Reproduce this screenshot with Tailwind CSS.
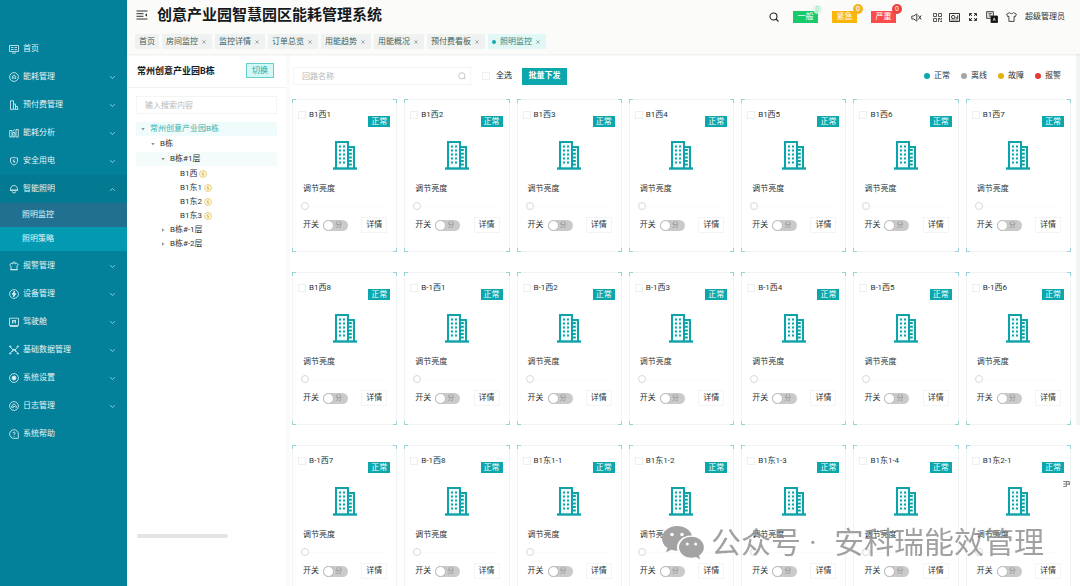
<!DOCTYPE html>
<html lang="zh-CN">
<head>
    <meta charset="UTF-8">
    <meta name="viewport" content="width=device-width, initial-scale=1.0">
    <title>创意产业园智慧园区能耗管理系统</title>
    <script src="https://cdn.jsdelivr.net/npm/@tailwindcss/browser@4"></script>
</head>
<body class="flex h-screen overflow-hidden bg-[#fbfbfa] font-['Roboto','Noto_Sans_CJK_SC',sans-serif] text-[8px] leading-[12px] text-[#2c3333]">

    <!-- 左侧菜单 -->
    <aside class="w-[127px] shrink-0 bg-[#03809a] pt-[35px] text-[#e3f5f6]">
        <nav id="sideMenu"></nav>
    </aside>

    <div class="flex min-w-0 flex-1 flex-col">
        <!-- 顶部栏 -->
        <header class="relative z-10 h-[54px] shrink-0 shadow-[0_1px_2px_rgba(0,0,0,0.08)]">
            <div class="flex h-[34px] items-center pr-[15px] pl-[9px]">
                <button aria-label="收起菜单" class="-mt-[5px] mr-[9px]">
                    <svg class="h-[10px] w-[12px]" viewBox="0 0 12 10" fill="none" stroke="#333" stroke-width="1"><path d="M.5 1h11M.5 3.7h7M.5 6.3h7M.5 9h11" /><path d="M11 3.2 9 5l2 1.8z" fill="#333" stroke="none" /></svg>
                </button>
                <h1 class="-mt-[5px] text-[15px] leading-[20px] font-bold whitespace-nowrap text-[#16191c]">创意产业园智慧园区能耗管理系统</h1>
                <div class="ml-auto flex items-center">
                    <button aria-label="搜索" class="mr-[14px]">
                        <svg class="size-[10px]" viewBox="0 0 10 10" fill="none" stroke="#222" stroke-width="1.1"><circle cx="4.5" cy="4.5" r="3.5" /><path d="M7 7l2.5 2.5" /></svg>
                    </button>
                    <button class="relative mr-[14px] h-[12px] w-[25px] bg-[#19ca6d] text-white">一般<span class="absolute -top-[6px] -right-[4px] size-[9px] rounded-full bg-[#d3f5e2]/80 text-center text-[7px] leading-[9px] text-[#9fe3c0]">0</span></button>
                    <button class="relative mr-[14px] h-[12px] w-[25px] bg-[#fbb60b] text-white">紧急<span class="absolute -top-[7px] -right-[6px] size-[10px] rounded-full bg-[#f3b51c] text-center text-[7px] leading-[10px] text-white">0</span></button>
                    <button class="relative mr-[15px] h-[12px] w-[25px] bg-[#fb4b4b] text-white">严重<span class="absolute -top-[7px] -right-[6px] size-[10px] rounded-full bg-[#ee4040] text-center text-[7px] leading-[10px] text-white">0</span></button>
                    <button aria-label="静音" class="mr-[11px]">
                        <svg class="h-[9px] w-[11px]" viewBox="0 0 11 9" fill="none" stroke="#333" stroke-width=".9"><path d="M.8 3h2L5.8.9v7.2L2.8 6h-2zM7.3 2.4l3 4.2M10.3 2.4l-3 4.2" /></svg>
                    </button>
                    <button aria-label="二维码" class="mr-[7px]">
                        <svg class="size-[9px]" viewBox="0 0 9 9" fill="none" stroke="#444" stroke-width=".9"><path d="M.5.5h3v3h-3zM5.5.5h3v3h-3zM.5 5.5h3v3h-3zM5.5 5v4M5.5 5.5h1.5v1.5M8.5 5v1.5M7 8.5h2M8.5 7.5v1" /></svg>
                    </button>
                    <button aria-label="大屏" class="mr-[9px]">
                        <svg class="h-[9px] w-[11px]" viewBox="0 0 11 9" fill="none" stroke="#333" stroke-width="1"><path d="M.5.5h10v8H.5z" /><path d="M1.5 7h8" stroke="#777" /><circle cx="4.2" cy="4" r="1.7" /><path d="M7.2 5.8V4M8.7 5.8V2.3" /></svg>
                    </button>
                    <button aria-label="全屏" class="mr-[9px]">
                        <svg class="size-[8px]" viewBox="0 0 8 8" fill="#222" stroke="#222" stroke-width=".8"><path d="M.4.4h2.4L.4 2.8zM7.6.4H5.2l2.4 2.4zM.4 7.6h2.4L.4 5.2zM7.6 7.6H5.2l2.4-2.4z" /><path d="M1 1l2 2M7 1 5 3M1 7l2-2M7 7 5 5" /></svg>
                    </button>
                    <button aria-label="切换语言" class="mr-[8px]">
                        <svg class="size-[12px]" viewBox="0 0 12 12" fill="none" stroke="#222" stroke-width=".9"><path d="M.7.7h6.6v6.6H.7z" /><path d="M2 2.7h4M2.4 5h3.2M4 1.8v3.8" stroke-width=".6" /><path d="M5 5h6.5v6.5H5z" fill="#111" /><path d="M7 9.8l1.2-3 1.2 3M7.4 8.8h1.7" stroke="#fff" stroke-width=".6" /></svg>
                    </button>
                    <button aria-label="主题" class="mr-[8px]">
                        <svg class="h-[10px] w-[11px]" viewBox="0 0 11 10" fill="none" stroke="#333" stroke-width=".9" stroke-linejoin="round"><path d="M3.6.6C4.2 2 6.8 2 7.4.6l3 1.6-1 2.4-1.3-.4v5.2H2.9V4.2l-1.3.4-1-2.4z" /></svg>
                    </button>
                    <a href="#" class="whitespace-nowrap">超级管理员</a>
                </div>
            </div>
            <!-- 页签 -->
            <nav id="pageTabs" class="flex gap-[3px] pl-[8px]"></nav>
        </header>

        <div class="flex min-h-0 flex-1">
            <!-- 楼栋树 -->
            <section class="flex w-[159px] shrink-0 flex-col bg-white">
                <div class="flex h-[34px] items-center justify-between border-b border-[#f1f3f3] pr-[12px] pl-[10px]">
                    <h2 class="text-[9px] font-bold whitespace-nowrap text-[#16191c]">常州创意产业园B栋</h2>
                    <button class="h-[15px] w-[28px] border border-[#62cfcd] bg-[#d3f7f5] text-[#1aa9a8]">切换</button>
                </div>
                <div class="px-[9px] pt-[8px]">
                    <input type="text" aria-label="输入搜索内容" placeholder="输入搜索内容" class="block h-[18px] w-full border border-[#f3f5f5] px-[8px] placeholder:text-[#b4b9b9]">
                    <div id="buildingTree" class="mt-[8px]"></div>
                </div>
                <div class="mt-auto mb-[48px] ml-[10px] h-[4px] w-[91px] rounded-full bg-[#e1e5e6]"></div>
            </section>

            <!-- 照明回路 -->
            <main class="flex min-w-0 flex-1 flex-col overflow-hidden border-l-4 border-[#fafafa] bg-white">
                <div class="flex items-center pt-[13px] pr-[15px] pl-[3px]">
                    <div class="relative w-[178px]">
                        <input type="text" aria-label="回路名称" placeholder="回路名称" class="block h-[18px] w-full border border-[#f3f5f5] px-[8px] placeholder:text-[#b4b9b9]">
                        <svg class="absolute top-[5px] right-[5px] size-[8px]" viewBox="0 0 8 8" fill="none" stroke="#b5baba" stroke-width=".8"><circle cx="3.8" cy="3.8" r="3.1" /><path d="M6 6l1.5 1.5" /></svg>
                    </div>
                    <label class="ml-[11px] flex items-center gap-[6px] whitespace-nowrap text-[#16191c]">
                        <input type="checkbox" class="size-[8px] appearance-none border border-[#eef0f0] checked:bg-[#0ba7ad]">全选
                    </label>
                    <button class="ml-[10px] h-[17px] w-[45px] bg-[#0ba7ad] font-bold whitespace-nowrap text-white">批量下发</button>
                    <ul class="ml-auto flex gap-[11px] whitespace-nowrap">
                        <li class="flex items-center gap-[4px]"><i class="size-[6px] rounded-full bg-[#0ba7ad]"></i>正常</li>
                        <li class="flex items-center gap-[4px]"><i class="size-[6px] rounded-full bg-[#a5a5a5]"></i>离线</li>
                        <li class="flex items-center gap-[4px]"><i class="size-[6px] rounded-full bg-[#e2b013]"></i>故障</li>
                        <li class="flex items-center gap-[4px]"><i class="size-[6px] rounded-full bg-[#e23a35]"></i>报警</li>
                    </ul>
                </div>
                <div id="cardGrid" class="mt-[14px] grid grid-cols-7 gap-x-[7px] gap-y-[20px] pr-[5px] pl-[2px]"></div>
            </main>
            <div class="w-[4px] shrink-0 bg-white"><div class="h-[371px] bg-[#f3f4f4]"></div></div>
        </div>
    </div>

    <!-- 悬浮工具与水印 -->
    <button aria-label="展开工具" class="fixed top-[480px] right-[10px] z-20 bg-white">
        <svg class="h-[8px] w-[7px]" viewBox="0 0 7 8" fill="none" stroke="#555" stroke-width=".8"><path d="M.3 1.5h2.400M.3 4h2.400M.3 6.500h2.400M3.300 1v6M3.300 1.500h3v2.500h-3M6.300 4v1" /></svg>
    </button>
    <div class="pointer-events-none fixed right-[36px] bottom-[22px] z-20 flex items-center text-[30px] leading-[42px] whitespace-nowrap text-[#8a8a8a]/80">
        <svg class="mr-[7px] h-[34px] w-[42px]" viewBox="0 0 42 34" fill="#a3a3a3"><path d="M15 0C6.7 0 0 5.6 0 12.5c0 3.9 2.1 7.3 5.500 9.600L4 26.500l5.200-2.700c2 .6 4 .9 6.300.9C13 16 20.500 9 30 9.400 28.500 4 22.300 0 15 0z" /><path d="M29.500 10.800C22.500 10.800 17 15.500 17 21.300s5.500 10.500 12.500 10.500c1.600 0 3.100-.2 4.500-.7l4.200 2.400-1.200-3.800c3-2 4.900-5 4.900-8.400 0-5.800-5.600-10.500-12.400-10.500z" /><g fill="#fff"><circle cx="10" cy="8.500" r="1.800" /><circle cx="20" cy="8.500" r="1.800" /><circle cx="25.300" cy="18" r="1.500" /><circle cx="33.700" cy="18" r="1.500" /></g></svg>
        <span>公众号</span><span class="w-[33px] pl-[8px]">·</span><span>安科瑞能效管理</span>
    </div>

<script>
    // 菜单图标
    const menuIcons = {
        home: '<path d="M.5 1.500h9v6h-9zM3 9h4M2 3.500h2.500M2 5.500h2.500M5.500 3.500H8M5.500 5.500H8" />',
        energy: '<circle cx="5" cy="5" r="4.400" /><path d="M3.300 7V4.500L5 3l1.700 1.500V7M5 4.500V7" />',
        prepay: '<path d="M1 9.300h8.500M1.500 9V.8h3V9M4.500 4h2v5M6.500 6.500h2V9" />',
        analysis: '<path d="M.7 9V2.500H3V9zM3.900 9V4.500h2V9zM7 9V1.500h2.300V9zM4 3l2-1.500" />',
        safe: '<path d="M5 1.200c1.200.6 2.200.8 3.500.8v3c0 2-1.500 3.300-3.500 4-2-.7-3.500-2-3.500-4V2c1.300 0 2.300-.2 3.500-.8zM5.300 3.200 4 5.200h2L4.900 7" />',
        light: '<path d="M1.700 6.200a3.500 3.500 0 1 1 6.600 0zM.8 6.200h8.400M3.300 7.300a1.700 1.700 0 0 0 3.400 0" />',
        alarm: '<path d="M2 8.700V5L.7 4l1.600-2L4 3V1.200h2V3l1.700-1 1.600 2L8 5v3.700zM1 8.700h8" />',
        device: '<circle cx="5" cy="5" r="4.400" /><path d="M5.500 2 3.200 5.300h1.600L4.500 8l2.300-3.300H5.200z" fill="currentColor" />',
        cockpit: '<path d="M.5 1.200h9v7.300h-9zM1 9.500h8M3 3.500h4M3.500 3.500v3M6.500 3.500v3M3.500 5h3" />',
        data: '<path d="M1 1.500 4 5 1 8.500M9 1.500 6 5l3 3.500M4 5h2M3 7l2-3 2 3" /><circle cx="1.200" cy="1.500" r=".7" /><circle cx="8.800" cy="1.500" r=".7" /><circle cx="1.200" cy="8.500" r=".7" /><circle cx="8.800" cy="8.500" r=".7" />',
        setting: '<circle cx="5" cy="5" r="4.400" /><circle cx="5" cy="5" r="1.900" fill="currentColor" />',
        log: '<circle cx="5" cy="5" r="4.400" /><path d="M2.800 7V5L5 2.700 7.200 5v2M4 7.200V5.500h2" />',
        help: '<path d="M9.300 9.300H5A4.300 4.300 0 1 1 9.300 5zM3.900 4a1.100 1.100 0 1 1 1.100 1.300v.6M5 6.800v.7" />'
    };

    const menus = [
        { icon: 'home', name: '首页' },
        { icon: 'energy', name: '能耗管理', arrow: true },
        { icon: 'prepay', name: '预付费管理', arrow: true },
        { icon: 'analysis', name: '能耗分析', arrow: true },
        { icon: 'safe', name: '安全用电', arrow: true },
        { icon: 'light', name: '智能照明', arrow: true, open: true },
        { icon: 'alarm', name: '报警管理', arrow: true },
        { icon: 'device', name: '设备管理', arrow: true },
        { icon: 'cockpit', name: '驾驶舱', arrow: true },
        { icon: 'data', name: '基础数据管理', arrow: true },
        { icon: 'setting', name: '系统设置', arrow: true },
        { icon: 'log', name: '日志管理', arrow: true },
        { icon: 'help', name: '系统帮助' }
    ];

    const tabs = ['首页', '房间监控', '监控详情', '订单总览', '用能趋势', '用能概况', '预付费看板', '照明监控'];

    const tree = [{
        name: '常州创意产业园B栋', active: true, open: true, children: [{
            name: 'B栋', open: true, children: [
                { name: 'B栋#1层', open: true, hover: true, children: [
                    { name: 'B1西', leaf: true },
                    { name: 'B1东1', leaf: true },
                    { name: 'B1东2', leaf: true },
                    { name: 'B1东3', leaf: true }
                ] },
                { name: 'B栋#-1层' },
                { name: 'B栋#-2层' }
            ]
        }]
    }];

    const circuits = [
        'B1西1', 'B1西2', 'B1西3', 'B1西4', 'B1西5', 'B1西6', 'B1西7',
        'B1西8', 'B-1西1', 'B-1西2', 'B-1西3', 'B-1西4', 'B-1西5', 'B-1西6',
        'B-1西7', 'B-1西8', 'B1东1-1', 'B1东1-2', 'B1东1-3', 'B1东1-4', 'B1东2-1'
    ];

    // 左侧菜单
    function renderMenu() {
        document.getElementById('sideMenu').innerHTML = menus.map(m => `
            <button class="flex h-[28px] w-full items-center pr-[12px] pl-[9px] text-left ${m.open ? 'bg-[#037a91]' : ''}">
                <svg class="mr-[4px] size-[10px]" viewBox="0 0 10 10" fill="none" stroke="currentColor" stroke-width=".8">${menuIcons[m.icon]}</svg>
                <span class="flex-1">${m.name}</span>
                ${m.arrow ? `<svg class="h-[3px] w-[5px] ${m.open ? 'rotate-180' : ''}" viewBox="0 0 5 3" fill="none" stroke="#b5dde3" stroke-width=".8"><path d="M.3.3 2.500 2.500 4.700.3" /></svg>` : ''}
            </button>
            ${m.open ? `
            <div class="pb-px">
                <a href="#" class="block h-[24px] bg-[#22708f] pl-[22px] leading-[24px]">照明监控</a>
                <a href="#" class="block h-[24px] bg-[#0299b1] pl-[22px] leading-[24px]">照明策略</a>
            </div>` : ''}`).join('');
    }

    // 页签
    function renderTabs() {
        document.getElementById('pageTabs').innerHTML = tabs.map((t, i) => {
            const active = i === tabs.length - 1;
            return `
            <a href="#" class="flex h-[15px] items-center px-[4px] whitespace-nowrap ${active ? 'bg-[#e2f8f7] text-[#2d8583]' : 'bg-[#f0f2f1] text-[#3f5f5c]'}">
                ${active ? '<i class="mr-[4px] size-[4px] rounded-full bg-[#17a9ae]"></i>' : ''}${t}
                ${i ? '<svg class="mr-[2px] ml-[4px] size-[4px]" viewBox="0 0 4 4" stroke="#5d7c7a" stroke-width=".6"><path d="M.4.4l3.200 3.200M3.600.4.4 3.600" /></svg>' : ''}
            </a>`;
        }).join('');
    }

    // 树节点
    function treeNodes(nodes, level) {
        return nodes.map(n => `
            <li>
                <div class="flex h-[14px] items-center whitespace-nowrap ${n.active ? 'bg-[#effcfb] text-[#35b3b1]' : ''} ${n.hover ? 'bg-[#f3fcfb]' : ''}" style="padding-left:${5 + level * 10}px">
                    <span class="flex w-[9px]">${n.leaf ? '' : `<svg class="size-[4px] ${n.open ? 'rotate-90' : ''}" viewBox="0 0 4 4" fill="#8a9292"><path d="M1 .3 3.400 2 1 3.700z" /></svg>`}</span>
                    ${n.name}
                    ${n.leaf ? '<svg class="ml-[2px] size-[8px]" viewBox="0 0 8 8" fill="#fdf7e0" stroke="#dfc15a" stroke-width=".7"><circle cx="4" cy="4" r="3.500" /><path d="M4.400 1.800 3 4.200h1.900L3.700 6.300" stroke="#d2a51c" /></svg>' : ''}
                </div>
                ${n.children ? `<ul class="pt-px">${treeNodes(n.children, level + 1)}</ul>` : ''}
            </li>`).join('');
    }

    // 回路卡片
    function renderCards() {
        document.getElementById('cardGrid').innerHTML = circuits.map((name, i) => `
            <article class="relative h-[153px] border border-[#f1f4f4] px-[10px] pt-[9px]">
                <i class="absolute -top-px -left-px size-[4px] border-t border-l border-[#9ad3d6]"></i>
                <i class="absolute -top-px -right-px size-[4px] border-t border-r border-[#9ad3d6]"></i>
                <i class="absolute -bottom-px -left-px size-[4px] border-b border-l border-[#9ad3d6]"></i>
                <i class="absolute -right-px -bottom-px size-[4px] border-r border-b border-[#9ad3d6]"></i>
                <span class="absolute top-[16px] right-[6px] h-[11px] w-[22px] bg-[#0ba7ad] text-center leading-[11px] text-white">正常</span>
                <label class="-ml-[5px] flex items-center gap-[3px]">
                    <input type="checkbox" class="size-[8px] appearance-none border border-[#eef0f0] checked:bg-[#0ba7ad]">${name}
                </label>
                <svg class="mx-auto mt-[19px] h-[30px] w-[24px]" viewBox="0 0 24 30" fill="none" stroke="#0fa2a9" stroke-width="2">
                    <path d="M16 7h5v21" fill="#e3f7f7" />
                    <path d="M3 28V2h12v26" fill="#f2fcfc" />
                    <path d="M0 28.500h24" stroke-width="2.400" />
                    <path d="M7 5.500v19M11 5.500v19" stroke-dasharray="2 2" />
                    <path d="M16 10h2.800M16 13.700h2.800M16 17.400h2.800M16 21h2.800M16 24.600h2.800" stroke-width="2" />
                </svg>
                <label for="dim${i}" class="mt-[13px] block">调节亮度</label>
                <input id="dim${i}" type="range" min="0" max="100" value="0" class="mt-[7px] -ml-[2px] block h-[8px] w-[83px] appearance-none bg-linear-to-b from-transparent from-45% via-[#e8ebeb] via-45% to-transparent to-60% [&::-webkit-slider-thumb]:size-[8px] [&::-webkit-slider-thumb]:appearance-none [&::-webkit-slider-thumb]:rounded-full [&::-webkit-slider-thumb]:border [&::-webkit-slider-thumb]:border-[#d6d9d9] [&::-webkit-slider-thumb]:bg-white">
                <div class="mt-[7px] flex items-center">
                    <label for="sw${i}" class="whitespace-nowrap">开关</label>
                    <input id="sw${i}" type="checkbox" role="switch" class="ml-[4px] flex h-[11px] w-[25px] appearance-none items-center justify-between rounded-full bg-[#cacaca] pr-[6px] before:size-[11px] before:rounded-full before:border before:border-[#b9b9b9] before:bg-white after:text-[7px] after:leading-[11px] after:text-[#8f8f8f] after:content-['分']">
                    <button class="-mr-[1px] ml-auto h-[16px] w-[26px] border border-[#f3f5f5] whitespace-nowrap">详情</button>
                </div>
            </article>`).join('');
    }

    renderMenu();
    renderTabs();
    document.getElementById('buildingTree').innerHTML = `<ul>${treeNodes(tree, 0)}</ul>`;
    renderCards();
</script>
</body>
</html>
